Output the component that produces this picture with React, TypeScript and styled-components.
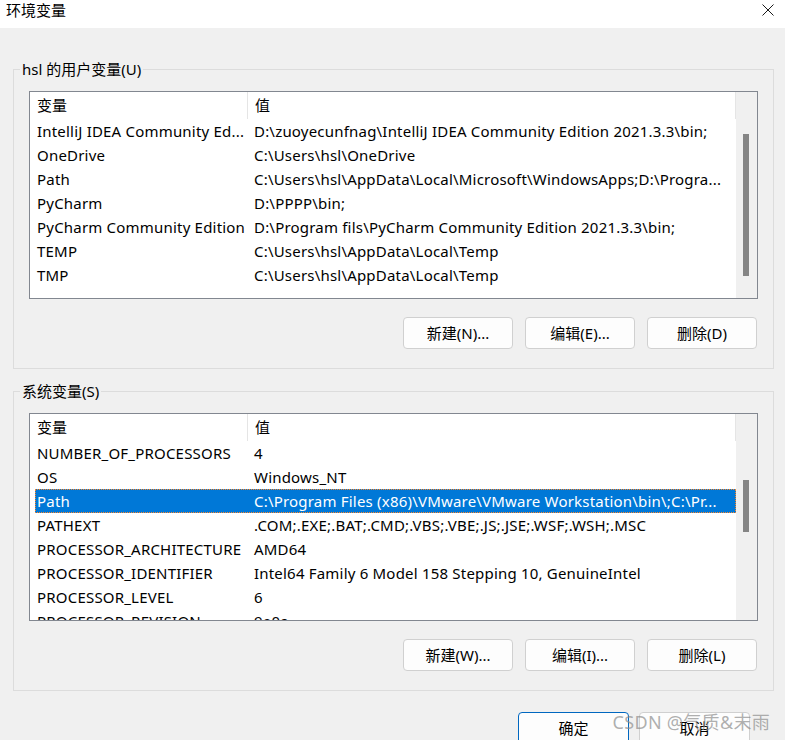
import React from "react";
import styled, { createGlobalStyle, css } from "styled-components";

const GlobalStyle = createGlobalStyle`
  html, body {
    margin: 0;
    padding: 0;
    background: #f0f0f0;
  }
  body {
    font-family: "Noto Sans", "Noto Sans CJK SC", sans-serif;
    font-size: 15px;
    color: #000;
  }
  * { box-sizing: border-box; }
`;

const Window = styled.div`
  position: relative;
  width: 785px;
  height: 740px;
  overflow: hidden;
  background: #f0f0f0;
`;

const TitleBar = styled.div`
  height: 28px;
  background: #ffffff;
  display: flex;
  justify-content: space-between;
  align-items: flex-start;
`;

const Title = styled.div`
  padding-left: 6px;
  line-height: 20px;
  font-size: 15px;
`;

const CloseIcon = styled.svg`
  margin: 4px 11px 0 0;
  width: 12px;
  height: 12px;
`;

const Body = styled.div`
  padding: 31px 11px 0 13px;
  display: flex;
  flex-direction: column;
`;

const Group = styled.fieldset<{ $first?: boolean }>`
  margin: ${(p) => (p.$first ? "0" : "12px")} 0 0 0;
  padding: 0;
  min-width: 0;
  border: 1px solid #dcdcdc;
`;

const Legend = styled.legend`
  margin-left: 6px;
  padding: 0 2px;
  line-height: 20px;
  font-size: 15px;
`;

const GroupContent = styled.div`
  padding: 12px 15px 19px 15px;
  display: flex;
  flex-direction: column;
`;

const ListView = styled.div`
  height: 208px;
  border: 1px solid #828790;
  background: #ffffff;
  display: flex;
  overflow: hidden;
`;

const ListContent = styled.div`
  flex: 1;
  min-width: 0;
  display: flex;
  flex-direction: column;
  overflow: hidden;
`;

const Header = styled.div`
  display: grid;
  grid-template-columns: 218px 1fr;
  height: 27px;
  flex-shrink: 0;
`;

const HeaderCell = styled.div`
  border-right: 1px solid #e5e5e5;
  padding-left: 7px;
  line-height: 27px;
  white-space: nowrap;
`;

const Row = styled.div<{ $selected?: boolean }>`
  flex-shrink: 0;
  height: 24px;
  margin-left: 5px;
  display: grid;
  grid-template-columns: 213px 1fr;
  line-height: 24px;
  letter-spacing: 0.2px;
  ${(p) =>
    p.$selected &&
    css`
      background: #0078d7;
      color: #ffffff;
      outline: 1px dotted #ff8728;
      outline-offset: -1px;
    `}
`;

const NameCell = styled.div`
  padding: 0 2px 0 2px;
  white-space: nowrap;
  overflow: hidden;
`;

const ValueCell = styled.div`
  padding: 0 2px 0 6px;
  white-space: nowrap;
  overflow: hidden;
`;

const ScrollTrack = styled.div`
  width: 21px;
  flex-shrink: 0;
  background: #f0f0f0;
  display: flex;
  flex-direction: column;
  align-items: flex-start;
`;

const ScrollThumb = styled.div<{ $offset: number; $size: number }>`
  margin: ${(p) => p.$offset}px 0 0 7px;
  width: 6px;
  height: ${(p) => p.$size}px;
  background: #858585;
`;

const ButtonRow = styled.div`
  margin-top: 18px;
  display: flex;
  justify-content: flex-end;
  gap: 12px;
  padding-right: 1px;
`;

const Button = styled.button<{ $default?: boolean }>`
  width: 110px;
  height: 32px;
  border: 1px solid #d0d0d0;
  border-radius: 4px;
  background: #fdfdfd;
  font-family: inherit;
  font-size: 15px;
  color: #000;
  padding: 0;
  line-height: 30px;
  ${(p) =>
    p.$default &&
    css`
      border-color: #0067c0;
    `}
`;

const Footer = styled.div`
  margin-top: 21px;
  padding-right: 24px;
  display: flex;
  justify-content: flex-end;
  gap: 10px;
`;

const FooterButton = styled(Button)`
  width: 111px;
`;

const Watermark = styled.div`
  position: absolute;
  right: 15px;
  bottom: 7px;
  font-size: 18px;
  line-height: 22px;
  letter-spacing: 0.3px;
  color: rgba(140, 140, 140, 0.7);
  white-space: nowrap;
`;

type Item = { name: string; value: string; selected?: boolean };

const userVars: Item[] = [
  { name: "IntelliJ IDEA Community Ed...", value: "D:\\zuoyecunfnag\\IntelliJ IDEA Community Edition 2021.3.3\\bin;" },
  { name: "OneDrive", value: "C:\\Users\\hsl\\OneDrive" },
  { name: "Path", value: "C:\\Users\\hsl\\AppData\\Local\\Microsoft\\WindowsApps;D:\\Progra..." },
  { name: "PyCharm", value: "D:\\PPPP\\bin;" },
  { name: "PyCharm Community Edition", value: "D:\\Program fils\\PyCharm Community Edition 2021.3.3\\bin;" },
  { name: "TEMP", value: "C:\\Users\\hsl\\AppData\\Local\\Temp" },
  { name: "TMP", value: "C:\\Users\\hsl\\AppData\\Local\\Temp" },
];

const sysVars: Item[] = [
  { name: "NUMBER_OF_PROCESSORS", value: "4" },
  { name: "OS", value: "Windows_NT" },
  { name: "Path", value: "C:\\Program Files (x86)\\VMware\\VMware Workstation\\bin\\;C:\\Pr...", selected: true },
  { name: "PATHEXT", value: ".COM;.EXE;.BAT;.CMD;.VBS;.VBE;.JS;.JSE;.WSF;.WSH;.MSC" },
  { name: "PROCESSOR_ARCHITECTURE", value: "AMD64" },
  { name: "PROCESSOR_IDENTIFIER", value: "Intel64 Family 6 Model 158 Stepping 10, GenuineIntel" },
  { name: "PROCESSOR_LEVEL", value: "6" },
  { name: "PROCESSOR_REVISION", value: "9e0a" },
];

function VarList({ items, thumbOffset, thumbSize }: { items: Item[]; thumbOffset: number; thumbSize: number }) {
  return (
    <ListView>
      <ListContent>
        <Header>
          <HeaderCell>变量</HeaderCell>
          <HeaderCell>值</HeaderCell>
        </Header>
        {items.map((it, i) => (
          <Row key={i} $selected={it.selected}>
            <NameCell>{it.name}</NameCell>
            <ValueCell>{it.value}</ValueCell>
          </Row>
        ))}
      </ListContent>
      <ScrollTrack>
        <ScrollThumb $offset={thumbOffset} $size={thumbSize} />
      </ScrollTrack>
    </ListView>
  );
}

export default function App() {
  return (
    <>
      <GlobalStyle />
      <Window>
        <TitleBar>
          <Title>环境变量</Title>
          <CloseIcon viewBox="0 0 12 12">
            <path d="M0.5 0.5 L11.5 11.5 M11.5 0.5 L0.5 11.5" stroke="#1a1a1a" strokeWidth="1" fill="none" />
          </CloseIcon>
        </TitleBar>
        <Body>
          <Group $first>
            <Legend>hsl 的用户变量(U)</Legend>
            <GroupContent>
              <VarList items={userVars} thumbOffset={42} thumbSize={142} />
              <ButtonRow>
                <Button>新建(N)...</Button>
                <Button>编辑(E)...</Button>
                <Button>删除(D)</Button>
              </ButtonRow>
            </GroupContent>
          </Group>
          <Group>
            <Legend>系统变量(S)</Legend>
            <GroupContent>
              <VarList items={sysVars} thumbOffset={66} thumbSize={52} />
              <ButtonRow>
                <Button>新建(W)...</Button>
                <Button>编辑(I)...</Button>
                <Button>删除(L)</Button>
              </ButtonRow>
            </GroupContent>
          </Group>
          <Footer>
            <FooterButton $default>确定</FooterButton>
            <FooterButton>取消</FooterButton>
          </Footer>
        </Body>
        <Watermark>CSDN @气质&amp;末雨</Watermark>
      </Window>
    </>
  );
}
